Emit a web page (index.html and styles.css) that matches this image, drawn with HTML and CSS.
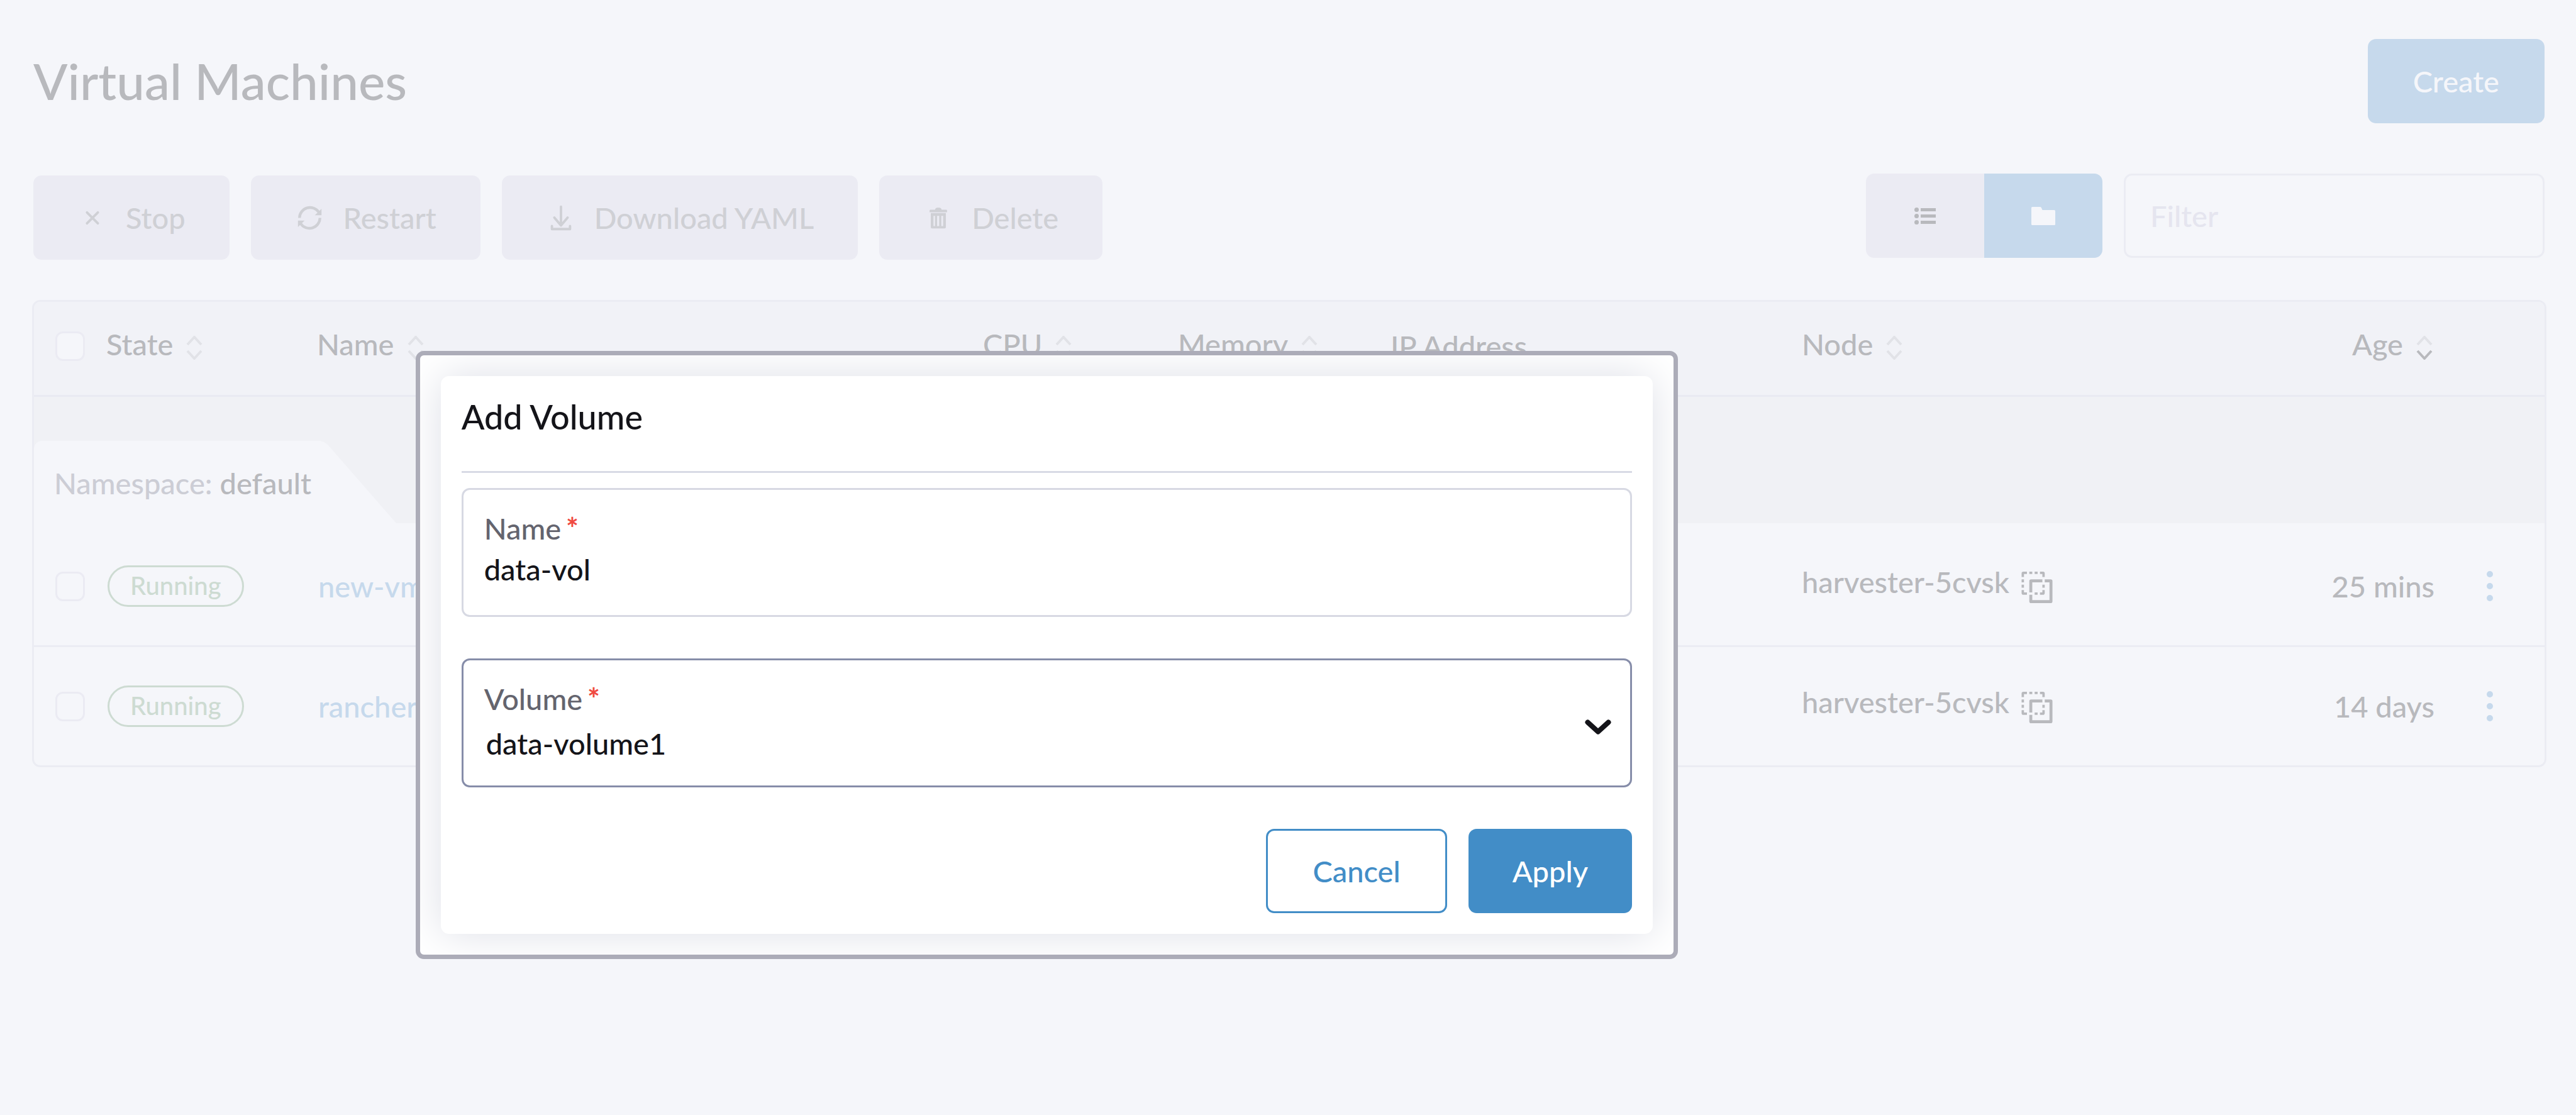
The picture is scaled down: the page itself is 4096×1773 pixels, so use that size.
FILE: index.html
```html
<!DOCTYPE html>
<html lang="en">
<head>
<meta charset="utf-8">
<title>Virtual Machines</title>
<link rel="stylesheet" href="styles.css">
</head>
<body>
<svg class="defs" aria-hidden="true">
  <symbol id="sort" viewBox="0 0 28 38">
    <path class="up" d="M3 14 14 2 25 14"/>
    <path class="down" d="M3 24 14 36 25 24"/>
  </symbol>
  <symbol id="copy" viewBox="0 0 52 53">
    <path d="M0 9V3a3 3 0 0 1 3-3h6v4H4v5zM13 0h5v4h-5zM22 0h5v4h-5zM31 0h5a3 3 0 0 1 3 3v6h-4V4h-4zM0 13h4v5H0zM0 22h4v5H0zM35 22h4v5h-4zM0 31h4v4h5v4H3a3 3 0 0 1-3-3zM35 31h4v5a3 3 0 0 1-3 3h-5v-4h4zM22 35h5v4h-5z"/>
    <path d="M16 13h19v5H18v17h-5V16a3 3 0 0 1 3-3zM39 13h10a3 3 0 0 1 3 3v34a3 3 0 0 1-3 3H16a3 3 0 0 1-3-3V39h5v9h29V18h-8z"/>
  </symbol>
  <symbol id="dots" viewBox="0 0 12 50">
    <circle cx="6" cy="6" r="5"/><circle cx="6" cy="25" r="5"/><circle cx="6" cy="44" r="5"/>
  </symbol>
</svg>

<main class="page">
  <header class="page-header">
    <h1>Virtual Machines</h1>
    <button class="btn primary faded" type="button">Create</button>
  </header>

  <div class="toolbar">
    <div class="actions">
      <button class="btn action" type="button" disabled>
        <svg class="icon" viewBox="0 0 49 49"><path d="M16 15.500 34 33.500M34 15.500 16 33.500" fill="none" stroke="currentColor" stroke-width="4" stroke-linecap="round"/></svg>Stop</button>
      <button class="btn action" type="button" disabled>
        <svg class="icon" viewBox="0 0 49 49"><path d="M7.500 24.500a17.500 17.500 0 0 1 32-9.500M41.500 24.500a17.500 17.500 0 0 1-32 9.500" fill="none" stroke="currentColor" stroke-width="4.500"/><path d="M44 9.500V20H33zM5 39.500V29h11z" fill="currentColor"/></svg>Restart</button>
      <button class="btn action" type="button" disabled>
        <svg class="icon" viewBox="0 0 49 49"><path d="M25 6v29M14 24 25 37 36 24M10 38v5H40V38" fill="none" stroke="currentColor" stroke-width="4" stroke-linecap="round" stroke-linejoin="round"/></svg>Download YAML</button>
      <button class="btn action" type="button" disabled>
        <svg class="icon" viewBox="0 0 49 49"><path fill="currentColor" fill-rule="evenodd" d="M20 9.500q1-2 3-2h4q2 0 3 2l.5 1.500H38a1.500 1.500 0 0 1 1.500 1.500V15h-29v-2.500A1.500 1.500 0 0 1 12 11h7.500zM12.500 16.500h25V40a2 2 0 0 1-2 2h-21a2 2 0 0 1-2-2zM17 21v17h2.500V21zM23 21v17h3.500V21zM30 21v17h3V21z"/></svg>Delete</button>
    </div>
    <div class="filters">
      <div class="toggle">
        <button type="button" aria-label="Flat list"><svg width="34" height="27" viewBox="0 0 34 27" fill="currentColor"><circle cx="3.500" cy="3.500" r="3.500"/><circle cx="3.500" cy="13.500" r="3.500"/><circle cx="3.500" cy="23.500" r="3.500"/><path d="M10 1h24v5H10zM10 11h24v5H10zM10 21h24v5H10z"/></svg></button>
        <button type="button" class="active" aria-label="Group by namespace"><svg width="38" height="29" viewBox="0 0 38 29" fill="currentColor"><path d="M1.500 0H14q1.500 0 2 1.500L17.500 5H36.500Q38 5 38 7v20.500Q38 29 36.500 29h-35Q0 29 0 27.500v-26Q0 0 1.500 0z"/></svg></button>
      </div>
      <input class="filter" type="search" placeholder="Filter" aria-label="Filter">
    </div>
  </div>

  <div class="table-frame">
    <table>
      <colgroup>
        <col class="c-check"><col class="c-state"><col><col class="c-cpu"><col class="c-memory"><col class="c-ip"><col class="c-node"><col class="c-age"><col class="c-menu">
      </colgroup>
      <thead>
        <tr>
          <th class="check"><input type="checkbox" aria-label="Select all"></th>
          <th><button class="sort" type="button">State<svg><use href="#sort"/></svg></button></th>
          <th><button class="sort" type="button">Name<svg><use href="#sort"/></svg></button></th>
          <th><button class="sort" type="button">CPU<svg><use href="#sort"/></svg></button></th>
          <th><button class="sort" type="button">Memory<svg><use href="#sort"/></svg></button></th>
          <th>IP Address</th>
          <th><button class="sort" type="button">Node<svg><use href="#sort"/></svg></button></th>
          <th><button class="sort end" type="button">Age<svg viewBox="0 0 28 38"><path d="M3 14 14 2 25 14"/><path class="current" d="M3 24 14 36 25 24"/></svg></button></th>
          <th></th>
        </tr>
      </thead>
      <tbody>
        <tr class="group">
          <td colspan="9"><div class="group-bar"><div class="group-tab">Namespace: <span>default</span></div></div></td>
        </tr>
        <tr class="row">
          <td class="check"><input type="checkbox" aria-label="Select new-vm"></td>
          <td><span class="badge">Running</span></td>
          <td><a href="#new-vm">new-vm</a></td>
          <td></td><td></td><td></td>
          <td>harvester-5cvsk <button class="copy" type="button" aria-label="Copy"><svg><use href="#copy"/></svg></button></td>
          <td class="age">25 mins</td>
          <td class="menu"><button type="button" aria-label="Actions"><svg><use href="#dots"/></svg></button></td>
        </tr>
        <tr class="row">
          <td class="check"><input type="checkbox" aria-label="Select rancher"></td>
          <td><span class="badge">Running</span></td>
          <td><a href="#rancher">rancher</a></td>
          <td></td><td></td><td></td>
          <td>harvester-5cvsk <button class="copy" type="button" aria-label="Copy"><svg><use href="#copy"/></svg></button></td>
          <td class="age">14 days</td>
          <td class="menu"><button type="button" aria-label="Actions"><svg><use href="#dots"/></svg></button></td>
        </tr>
      </tbody>
    </table>
  </div>
</main>

<div class="modal" role="dialog" aria-labelledby="modal-title">
  <form class="card">
    <h2 id="modal-title">Add Volume</h2>
    <hr>
    <div class="field">
      <label for="name">Name <span>*</span></label>
      <input id="name" type="text" value="data-vol">
    </div>
    <div class="field select">
      <label for="volume">Volume <span>*</span></label>
      <select id="volume"><option>data-volume1</option></select>
      <svg class="chevron" viewBox="0 0 42 24"><path d="M4.500 4.500 21 19.500 37.500 4.500" fill="none" stroke="currentColor" stroke-width="8" stroke-linecap="round" stroke-linejoin="round"/></svg>
    </div>
    <div class="buttons">
      <button class="btn secondary" type="button">Cancel</button>
      <button class="btn primary" type="button">Apply</button>
    </div>
  </form>
</div>
</body>
</html>
```
FILE: styles.css
```css
* { box-sizing: border-box; }

body {
  margin: 0;
  min-height: 100vh;
  background: #f5f6fa;
  color: #b8b9bd;
  font: 500 47px/56px Lato, "Liberation Sans", sans-serif;
}

button, input, select {
  margin: 0;
  padding: 0;
  border: 0;
  background: none;
  color: inherit;
  font: inherit;
}

h1, h2 { margin: 0; font-weight: 500; }

.defs { display: none; }

.page { padding: 62px 47px 0 51px; }

.page-header {
  display: flex;
  align-items: center;
  justify-content: space-between;
  padding: 0 3px 0 2px;
}

h1 { padding-bottom: 3px; font-size: 80px; line-height: 96px; }

.btn {
  display: flex;
  align-items: center;
  height: 134px;
  padding: 0 70px;
  border-radius: 13px;
}

.primary { background: #428dc7; color: #fff; }
.faded { padding: 0 72px; background: #c6d9ec; color: #f5f6fa; }
.secondary { padding: 0 71px; border: 3px solid #428dc7; color: #428dc7; }

.toolbar {
  display: flex;
  align-items: flex-start;
  justify-content: space-between;
  margin: 80px 0 64px;
  padding: 0 3px 0 2px;
}

.actions { display: flex; gap: 34px; padding-top: 3px; }
.action { gap: 30px; background: #ebebf3; color: #cfd0d5; }
.icon { width: 47px; height: 47px; }

.filters { display: flex; gap: 34px; }

.toggle { display: flex; border-radius: 13px; overflow: hidden; }

.toggle button {
  display: grid;
  place-items: center;
  width: 188px;
  height: 134px;
  background: #ebebf3;
}

.toggle .active { background: #c6d9ec; color: #f5f6fa; }

.filter {
  width: 669px;
  height: 134px;
  padding: 0 39px;
  border: 3px solid #ebecf3;
  border-radius: 13px;
}

.filter::placeholder { color: #e5e5ef; opacity: 1; }

.table-frame {
  border: 3px solid #ebecf3;
  border-radius: 13px;
  overflow: hidden;
}

table { width: 100%; table-layout: fixed; border-collapse: separate; border-spacing: 0; }

.c-check { width: 115px; }
.c-state { width: 335px; }
.c-cpu { width: 310px; }
.c-memory { width: 338px; }
.c-ip { width: 654px; }
.c-node { width: 706px; }
.c-age { width: 300px; }
.c-menu { width: 175px; }

th, td { padding: 0; text-align: left; font-weight: 500; vertical-align: middle; }

th {
  height: 151px;
  padding-bottom: 8px;
  background: #f1f2f7;
  border-bottom: 3px solid #e9eaf2;
}

.check { padding-left: 34px; }

.check input {
  display: block;
  appearance: none;
  width: 47px;
  height: 47px;
  border: 3px solid #ebebf3;
  border-radius: 12px;
  background: #f5f6fa;
}

.sort { display: flex; gap: 20px; width: 100%; padding-bottom: 6px; }

.sort svg {
  width: 28px;
  height: 38px;
  margin-top: 15px;
  fill: none;
  stroke: #e1e2e7;
  stroke-width: 4px;
}

.sort .current { stroke: #b8b9bd; }
.sort.end { justify-content: flex-end; padding-right: 2px; }

.group td { height: 207px; vertical-align: top; }
.group-bar { padding-top: 70px; background: #f0f1f5; }

.group-tab {
  width: fit-content;
  height: 131px;
  padding: 39px 135px 0 32px;
  border-top-left-radius: 13px;
  background: #f5f6fa;
  color: #cccdd5;
  clip-path: polygon(0 0, calc(100% - 121px) 0, calc(100% - 115px) 2px, calc(100% - 109px) 6px, 100% 100%, 0 100%);
}

.group-tab span { color: #b8b9bd; }

.row td { height: 191px; border-bottom: 3px solid #ebecf3; }
.row:last-child td { height: 188px; border-bottom: 0; }

.badge {
  display: block;
  width: fit-content;
  height: 66px;
  margin-left: 2px;
  padding: 0 33px;
  border: 3px solid #cddbd2;
  border-radius: 33px;
  color: #cddbd2;
  font-size: 40px;
  line-height: 58px;
}

.row a { color: #c6d9ec; text-decoration: none; padding-left: 2px; }

.copy { display: inline-block; margin: 0 0 8px 7px; vertical-align: -16px; }
.copy svg { display: block; width: 50px; height: 50px; fill: #b8b9bd; }

.row .age { text-align: right; }

.menu button { display: block; margin: 0 auto; }
.menu svg { display: block; width: 12px; height: 50px; fill: #c6d9ec; }

.modal {
  position: absolute;
  top: 558px;
  left: 16.13%;
  width: 49.01%;
  padding: 33px;
  border: 7px solid #acacb8;
  border-radius: 13px;
  background: #fff;
  color: #141419;
  overflow: hidden;
}

.card {
  display: flex;
  flex-direction: column;
  padding: 33px;
  border-radius: 13px;
  background: #fff;
  box-shadow: 0 0 67px #dddfe7;
}

h2 { font-size: 54px; line-height: 64px; }

hr { width: 100%; height: 3px; margin: 54px 0 24px; border: 0; background: #d8dae5; }

.field {
  position: relative;
  display: flex;
  flex-direction: column;
  gap: 9px;
  height: 205px;
  margin-bottom: 66px;
  padding: 33px 33px 0;
  border: 3px solid #d7d9e3;
  border-radius: 13px;
}

.field.select { gap: 15px; border-color: #868da9; }
.field label { color: #64646e; }
.field label span { margin-left: -4px; color: #f04a42; font-weight: 700; }

.field select { appearance: none; height: 56px; padding-left: 3px; }
.field input { height: 56px; }

.chevron {
  position: absolute;
  right: 30px;
  top: 94px;
  width: 42px;
  height: 24px;
  pointer-events: none;
}

.buttons { display: flex; justify-content: flex-end; gap: 34px; }
```
